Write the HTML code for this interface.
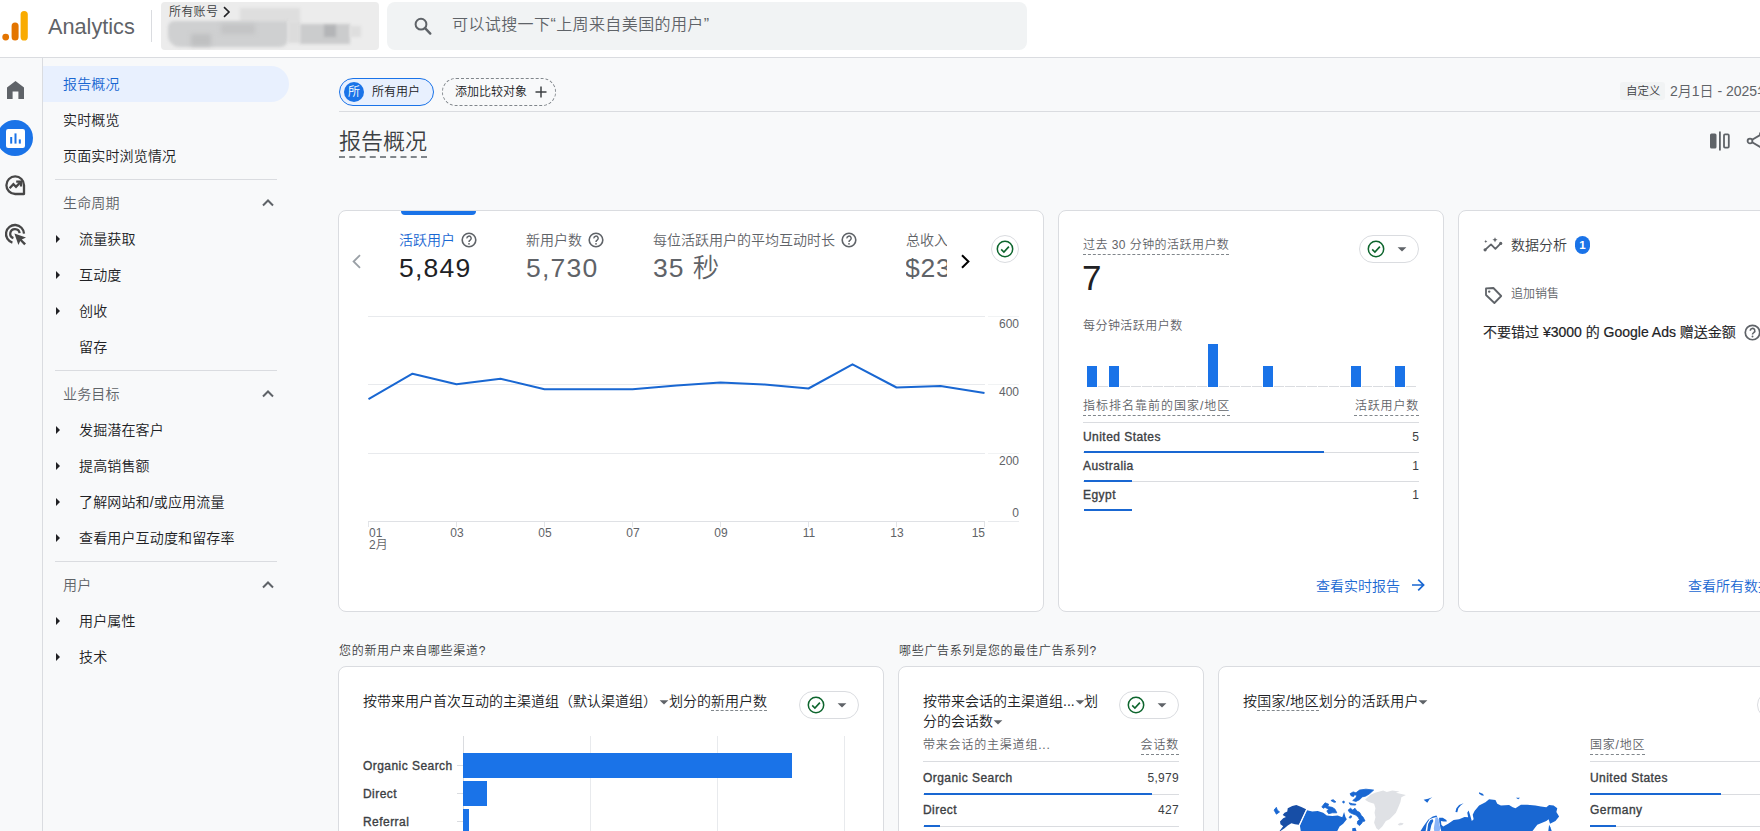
<!DOCTYPE html>
<html lang="zh-CN">
<head>
<meta charset="utf-8">
<title>Analytics</title>
<style>
*{box-sizing:border-box;margin:0;padding:0}
html,body{width:1760px;height:831px;overflow:hidden;background:#f8f9fa}
body{font-weight:350;position:relative;font-family:"Liberation Sans","Noto Sans CJK SC",sans-serif;color:#202124;font-size:14px}
.a{position:absolute}
.t{position:absolute;white-space:nowrap;line-height:20px;height:20px}
.g{color:#5f6368}
.d{color:#3c4043}
.b{color:#1a73e8}
.s12{font-size:12px;letter-spacing:.6px}
.m{-webkit-text-stroke:.35px currentColor}
.dash{border-bottom:1px dashed #80868b}
.card{position:absolute;background:#fff;border:1px solid #dadce0;border-radius:8px}
.hl{position:absolute;height:1px;background:#dadce0}
.bar{position:absolute;height:2px;background:#1967d2}
svg{position:absolute;overflow:visible}
/* header */
#hdr{left:0;top:0;width:1760px;height:58px;background:#fff;border-bottom:1px solid #dadce0}
#rail{left:0;top:58px;width:43px;height:773px;border-right:1px solid #dadce0;background:#f8f9fa}
.nav{position:absolute;left:63px;font-size:14px;letter-spacing:.15px;line-height:20px;height:20px;white-space:nowrap;color:#202124}
.sub{left:79px}
.sec{color:#5f6368}
.tri{position:absolute;left:56px;width:0;height:0;border-left:4px solid #202124;border-top:4px solid transparent;border-bottom:4px solid transparent}
.pill{position:absolute;width:60px;height:28px;border:1px solid #dadce0;border-radius:14px;background:#fff}
</style>
</head>
<body>
<!-- HEADER -->
<div class="a" id="hdr"></div>
<div class="a" id="rail"></div>
<!-- logo -->
<svg style="left:2px;top:11px" width="27" height="30" viewBox="0 0 27 30">
<rect x="18.6" y="0" width="7.2" height="29.5" rx="3.6" fill="#f9ab00"/>
<rect x="9.6" y="11.6" width="7" height="17.9" rx="3.5" fill="#e37400"/>
<circle cx="3.7" cy="26.1" r="3.4" fill="#e37400"/>
</svg>
<div class="t" style="left:48px;top:12px;font-size:21.7px;line-height:30px;height:30px;color:#5f6368">Analytics</div>
<div class="a" style="left:151px;top:10px;width:1px;height:32px;background:#dadce0"></div>
<!-- account box -->
<div class="a" style="left:161px;top:2px;width:218px;height:48px;background:#ececec;border-radius:4px;overflow:hidden">
 <div class="a" style="left:79px;top:6px;width:60px;height:14px;background:#dedede;filter:blur(1.5px)"></div>
 <div class="a" style="left:7px;top:19px;width:120px;height:26px;background:#cfd0d1;border-radius:6px 2px 8px 12px;filter:blur(1.5px)"></div>
 <div class="a" style="left:30px;top:32px;width:20px;height:12px;background:#bfc0c1;filter:blur(2px)"></div>
 <div class="a" style="left:60px;top:22px;width:34px;height:10px;background:#c3c4c5;filter:blur(2px)"></div>
 <div class="a" style="left:127px;top:19px;width:12px;height:22px;background:#dcdcdc;filter:blur(1.5px)"></div>
 <div class="a" style="left:139px;top:22px;width:50px;height:20px;background:#cbcccd;filter:blur(1.5px)"></div>
 <div class="a" style="left:163px;top:23px;width:12px;height:12px;background:#b4b5b7;filter:blur(1.5px)"></div>
 <div class="a" style="left:189px;top:24px;width:11px;height:11px;background:#dedede;filter:blur(1.5px)"></div>
</div>
<div class="t d" style="left:169px;top:2px;font-size:12px;letter-spacing:.3px">所有账号</div>
<svg style="left:222px;top:6px" width="10" height="12" viewBox="0 0 10 12"><path d="M2 1.2 L7 6 L2 10.8" fill="none" stroke="#202124" stroke-width="1.6"/></svg>
<!-- search -->
<div class="a" style="left:387px;top:2px;width:640px;height:48px;background:#f1f3f4;border-radius:8px"></div>
<svg style="left:413px;top:16px" width="20" height="20" viewBox="0 0 20 20"><circle cx="8" cy="8.2" r="5.4" fill="none" stroke="#5f6368" stroke-width="2"/><path d="M12 12.2 L17.3 17.6" stroke="#5f6368" stroke-width="2.4" stroke-linecap="round"/></svg>
<div class="t g" style="left:452px;top:13px;font-size:16px;line-height:24px;height:24px;letter-spacing:.4px">可以试搜一下“上周来自美国的用户”</div>
<!-- RAIL ICONS -->
<svg style="left:7px;top:81px" width="17" height="18" viewBox="0 0 17 18"><path d="M8.5 0 L17 6.6 V18 H11.4 V10.6 H5.6 V18 H0 V6.6 Z" fill="#5f6368"/></svg>
<div class="a" style="left:-3px;top:120px;width:36px;height:36px;border-radius:18px;background:#1a73e8"></div>
<svg style="left:6px;top:129px" width="19" height="19" viewBox="0 0 19 19"><rect x="0" y="0" width="19" height="19" rx="2.2" fill="#fff"/><rect x="4.2" y="8" width="2" height="6.6" fill="#1a73e8"/><rect x="8.5" y="4.4" width="2" height="10.2" fill="#1a73e8"/><rect x="12.8" y="10.4" width="2" height="4.2" fill="#1a73e8"/></svg>
<svg style="left:5px;top:175px" width="21" height="21" viewBox="0 0 21 21"><path d="M10.2 19 A8.8 8.8 0 1 1 19 10.2 V19 Z" fill="none" stroke="#474747" stroke-width="2.3" stroke-linejoin="round"/><path d="M4.6 13.2 L8.4 9.2 L11 11.8 L15 7.6" fill="none" stroke="#474747" stroke-width="2.3"/><path d="M11.2 6.6 H16 V11.4" fill="none" stroke="#474747" stroke-width="2.3"/></svg>
<svg style="left:5px;top:224px" width="22" height="22" viewBox="0 0 22 22"><path d="M7.4 18.6 A9 9 0 1 1 19 9.6" fill="none" stroke="#474747" stroke-width="2.3"/><path d="M8.4 14.2 A4.7 4.7 0 1 1 14.6 9.2" fill="none" stroke="#474747" stroke-width="2.3"/><path d="M9.4 9.4 L21 13.6 L16.8 15.4 L21 19.6 L19.2 21.2 L15.2 17 L13.4 21 Z" fill="#474747"/></svg>
<!-- SIDEBAR -->
<div class="a" style="left:43px;top:66px;width:246px;height:36px;border-radius:0 18px 18px 0;background:#e8f0fe"></div>
<div class="nav" style="top:74px;color:#1967d2">报告概况</div>
<div class="nav" style="top:110px">实时概览</div>
<div class="nav" style="top:146px">页面实时浏览情况</div>
<div class="hl" style="left:55px;top:179px;width:222px"></div>
<div class="nav sec" style="top:193px">生命周期</div>
<div class="tri" style="top:235px"></div><div class="nav sub" style="top:229px">流量获取</div>
<div class="tri" style="top:271px"></div><div class="nav sub" style="top:265px">互动度</div>
<div class="tri" style="top:307px"></div><div class="nav sub" style="top:301px">创收</div>
<div class="nav sub" style="top:337px">留存</div>
<div class="hl" style="left:55px;top:370px;width:222px"></div>
<div class="nav sec" style="top:384px">业务目标</div>
<div class="tri" style="top:426px"></div><div class="nav sub" style="top:420px">发掘潜在客户</div>
<div class="tri" style="top:462px"></div><div class="nav sub" style="top:456px">提高销售额</div>
<div class="tri" style="top:498px"></div><div class="nav sub" style="top:492px">了解网站和/或应用流量</div>
<div class="tri" style="top:534px"></div><div class="nav sub" style="top:528px">查看用户互动度和留存率</div>
<div class="hl" style="left:55px;top:561px;width:222px"></div>
<div class="nav sec" style="top:575px">用户</div>
<div class="tri" style="top:617px"></div><div class="nav sub" style="top:611px">用户属性</div>
<div class="tri" style="top:653px"></div><div class="nav sub" style="top:647px">技术</div>
<svg style="left:262px;top:199px" width="12" height="8" viewBox="0 0 12 8"><path d="M1 6.5 L6 1.5 L11 6.5" fill="none" stroke="#5f6368" stroke-width="2"/></svg>
<svg style="left:262px;top:390px" width="12" height="8" viewBox="0 0 12 8"><path d="M1 6.5 L6 1.5 L11 6.5" fill="none" stroke="#5f6368" stroke-width="2"/></svg>
<svg style="left:262px;top:581px" width="12" height="8" viewBox="0 0 12 8"><path d="M1 6.5 L6 1.5 L11 6.5" fill="none" stroke="#5f6368" stroke-width="2"/></svg>
<!-- TOP BAR of content -->
<div class="a" style="left:339px;top:78px;width:95px;height:28px;border:1px solid #1a73e8;border-radius:14px;background:#e8f0fe"></div>
<div class="a" style="left:344px;top:82px;width:20px;height:20px;border-radius:10px;background:#1a73e8"></div>
<div class="t" style="left:348px;top:82px;font-size:12px;color:#fff">所</div>
<div class="t" style="left:372px;top:82px;font-size:12px;color:#202124">所有用户</div>
<div class="a" style="left:442px;top:78px;width:114px;height:28px;border:1px dashed #80868b;border-radius:14px"></div>
<div class="t" style="left:455px;top:82px;font-size:12px;color:#202124">添加比较对象</div>
<svg style="left:535px;top:86px" width="12" height="12" viewBox="0 0 12 12"><path d="M6 0.5 V11.5 M0.5 6 H11.5" stroke="#3c4043" stroke-width="1.5"/></svg>
<div class="hl" style="left:339px;top:111px;width:1421px"></div>
<div class="a" style="left:1620px;top:82px;width:45px;height:18px;background:#f1f3f4;border-radius:3px"></div>
<div class="t d" style="left:1626px;top:81px;font-size:11.5px">自定义</div>
<div class="t g" style="left:1670px;top:81px;font-size:14px">2月1日 - 2025年2月15日</div>
<div class="t d" style="left:339px;top:127px;font-size:22px;line-height:30px;height:31px;border-bottom:2px dashed #80868b;color:#3c4043">报告概况</div>
<svg style="left:1709px;top:131px" width="22" height="20" viewBox="0 0 22 20"><rect x="1" y="2.5" width="6.5" height="15" rx="1.5" fill="#5f6368"/><rect x="10" y="0.5" width="1.8" height="19" fill="#5f6368"/><rect x="15" y="3.4" width="4.8" height="13.2" rx="1" fill="none" stroke="#5f6368" stroke-width="1.8"/></svg>
<svg style="left:1746px;top:130px" width="20" height="22" viewBox="0 0 20 22"><path d="M4 11 L15 4.5 M4 11 L15 17.5" stroke="#5f6368" stroke-width="1.8"/><circle cx="4" cy="11" r="2.4" fill="#f8f9fa" stroke="#5f6368" stroke-width="1.8"/><circle cx="15.5" cy="4" r="2.4" fill="#5f6368"/></svg>
<!-- CARD 1 -->
<div class="card" style="left:338px;top:210px;width:706px;height:402px"></div>
<div class="a" style="left:401px;top:211px;width:75px;height:4px;background:#1a73e8;border-radius:0 0 4px 4px"></div>
<svg style="left:351px;top:254px" width="11" height="15" viewBox="0 0 11 15"><path d="M9 1.2 L2.6 7.5 L9 13.8" fill="none" stroke="#9aa0a6" stroke-width="1.8"/></svg>
<div class="t b" style="left:399px;top:230px;color:#1967d2">活跃用户</div><svg style="left:461px;top:232px" width="16" height="16" viewBox="0 0 16 16"><circle cx="8" cy="8" r="6.8" fill="none" stroke="#5f6368" stroke-width="1.6"/><path d="M5.9 6.4 A2.15 2.15 0 1 1 9.2 8.1 C8.3 8.7 8 9 8 9.9" fill="none" stroke="#5f6368" stroke-width="1.5"/><circle cx="8" cy="11.8" r="0.9" fill="#5f6368"/></svg>
<div class="t" style="left:399px;top:252px;font-size:26.5px;line-height:32px;height:32px;letter-spacing:1.2px;color:#202124">5,849</div>
<div class="t g" style="left:526px;top:230px">新用户数</div><svg style="left:588px;top:232px" width="16" height="16" viewBox="0 0 16 16"><circle cx="8" cy="8" r="6.8" fill="none" stroke="#5f6368" stroke-width="1.6"/><path d="M5.9 6.4 A2.15 2.15 0 1 1 9.2 8.1 C8.3 8.7 8 9 8 9.9" fill="none" stroke="#5f6368" stroke-width="1.5"/><circle cx="8" cy="11.8" r="0.9" fill="#5f6368"/></svg>
<div class="t g" style="left:526px;top:252px;font-size:26.5px;line-height:32px;height:32px;letter-spacing:1.2px">5,730</div>
<div class="t g" style="left:653px;top:230px">每位活跃用户的平均互动时长</div><svg style="left:841px;top:232px" width="16" height="16" viewBox="0 0 16 16"><circle cx="8" cy="8" r="6.8" fill="none" stroke="#5f6368" stroke-width="1.6"/><path d="M5.9 6.4 A2.15 2.15 0 1 1 9.2 8.1 C8.3 8.7 8 9 8 9.9" fill="none" stroke="#5f6368" stroke-width="1.5"/><circle cx="8" cy="11.8" r="0.9" fill="#5f6368"/></svg>
<div class="t g" style="left:653px;top:252px;font-size:26.5px;line-height:32px;height:32px;letter-spacing:1px">35 秒</div>
<div class="a" style="left:906px;top:228px;width:41px;height:60px;overflow:hidden">
<div class="t g" style="left:0;top:2px">总收入</div>
<div class="t g" style="left:-1px;top:24px;font-size:26.5px;line-height:32px;height:32px;letter-spacing:.8px">$23,4</div>
</div>
<svg style="left:960px;top:254px" width="11" height="15" viewBox="0 0 11 15"><path d="M2 1.2 L8.4 7.5 L2 13.8" fill="none" stroke="#000" stroke-width="2"/></svg>
<div class="a" style="left:991px;top:235px;width:28px;height:28px;border:1px solid #dadce0;border-radius:14px;background:#fff"></div><svg style="left:996px;top:240px" width="18" height="18" viewBox="0 0 18 18"><circle cx="9" cy="9" r="7.7" fill="none" stroke="#0d652d" stroke-width="1.5"/><path d="M5.2 9.4 L7.9 12 L12.9 6.6" fill="none" stroke="#0d652d" stroke-width="1.6"/></svg>
<!-- chart -->
<div class="hl" style="left:368px;top:316px;width:617px;background:#e8eaed"></div><div class="hl" style="left:988px;top:316px;width:31px;background:#f1f3f4"></div>
<div class="hl" style="left:368px;top:384px;width:617px;background:#e8eaed"></div><div class="hl" style="left:988px;top:384px;width:31px;background:#f1f3f4"></div>
<div class="hl" style="left:368px;top:453px;width:617px;background:#e8eaed"></div><div class="hl" style="left:988px;top:453px;width:31px;background:#f1f3f4"></div>
<div class="hl" style="left:368px;top:521px;width:617px;background:#dfe1e5"></div><div class="hl" style="left:988px;top:521px;width:31px;background:#e8eaed"></div><div class="a" style="left:368px;top:522px;width:1px;height:5px;background:#e3e5e8"></div><div class="a" style="left:456px;top:522px;width:1px;height:5px;background:#e3e5e8"></div><div class="a" style="left:544px;top:522px;width:1px;height:5px;background:#e3e5e8"></div><div class="a" style="left:632px;top:522px;width:1px;height:5px;background:#e3e5e8"></div><div class="a" style="left:720px;top:522px;width:1px;height:5px;background:#e3e5e8"></div><div class="a" style="left:808px;top:522px;width:1px;height:5px;background:#e3e5e8"></div><div class="a" style="left:896px;top:522px;width:1px;height:5px;background:#e3e5e8"></div><div class="a" style="left:984px;top:522px;width:1px;height:5px;background:#e3e5e8"></div>
<div class="t g" style="left:980px;top:314px;width:39px;text-align:right;font-size:12px">600</div>
<div class="t g" style="left:980px;top:382px;width:39px;text-align:right;font-size:12px">400</div>
<div class="t g" style="left:980px;top:451px;width:39px;text-align:right;font-size:12px">200</div>
<div class="t g" style="left:980px;top:503px;width:39px;text-align:right;font-size:12px">0</div>
<svg style="left:339px;top:210px" width="705" height="401" viewBox="0 0 705 401"><polyline points="29.5,189.2 73.5,163.7 117.5,174.3 161.5,168.7 205.5,179.3 249.5,179.3 293.5,179.3 337.5,175.5 381.5,172.5 425.5,174.5 469.5,178.5 513.5,154.3 557.5,177.5 601.5,176.0 645.5,183.1" fill="none" stroke="#1967d2" stroke-width="2" stroke-linejoin="round"/></svg>
<div class="t g" style="left:369px;top:523px;font-size:12px">01</div>
<div class="t g" style="left:442px;top:523px;width:30px;text-align:center;font-size:12px">03</div>
<div class="t g" style="left:530px;top:523px;width:30px;text-align:center;font-size:12px">05</div>
<div class="t g" style="left:618px;top:523px;width:30px;text-align:center;font-size:12px">07</div>
<div class="t g" style="left:706px;top:523px;width:30px;text-align:center;font-size:12px">09</div>
<div class="t g" style="left:794px;top:523px;width:30px;text-align:center;font-size:12px">11</div>
<div class="t g" style="left:882px;top:523px;width:30px;text-align:center;font-size:12px">13</div>
<div class="t g" style="left:955px;top:523px;width:30px;text-align:right;font-size:12px">15</div>
<div class="t g" style="left:369px;top:535px;font-size:12px">2月</div>
<!-- CARD 2 -->
<div class="card" style="left:1058px;top:210px;width:386px;height:402px"></div>
<div class="t g s12 dash" style="left:1083px;top:235px;height:20px;letter-spacing:.45px">过去 30 分钟的活跃用户数</div>
<div class="t" style="left:1082px;top:256px;font-size:35px;line-height:44px;height:44px;color:#202124">7</div>
<div class="pill" style="left:1359px;top:235px"></div><svg style="left:1367px;top:240px" width="18" height="18" viewBox="0 0 18 18"><circle cx="9" cy="9" r="7.7" fill="none" stroke="#0d652d" stroke-width="1.5"/><path d="M5.2 9.4 L7.9 12 L12.9 6.6" fill="none" stroke="#0d652d" stroke-width="1.6"/></svg><svg style="left:1397px;top:246px" width="10" height="6" viewBox="0 0 10 6"><path d="M0.6 1.2 H9.4 L5 5.6 Z" fill="#5f6368"/></svg>
<div class="t g s12" style="left:1083px;top:316px;letter-spacing:.45px">每分钟活跃用户数</div>
<div class="a" style="left:1087px;top:366px;width:10px;height:21px;background:#1a73e8"></div><div class="a" style="left:1098px;top:386px;width:10px;height:1px;background:#dadce0"></div><div class="a" style="left:1109px;top:366px;width:10px;height:21px;background:#1a73e8"></div><div class="a" style="left:1120px;top:386px;width:10px;height:1px;background:#dadce0"></div><div class="a" style="left:1131px;top:386px;width:10px;height:1px;background:#dadce0"></div><div class="a" style="left:1142px;top:386px;width:10px;height:1px;background:#dadce0"></div><div class="a" style="left:1153px;top:386px;width:10px;height:1px;background:#dadce0"></div><div class="a" style="left:1164px;top:386px;width:10px;height:1px;background:#dadce0"></div><div class="a" style="left:1175px;top:386px;width:10px;height:1px;background:#dadce0"></div><div class="a" style="left:1186px;top:386px;width:10px;height:1px;background:#dadce0"></div><div class="a" style="left:1197px;top:386px;width:10px;height:1px;background:#dadce0"></div><div class="a" style="left:1208px;top:344px;width:10px;height:43px;background:#1a73e8"></div><div class="a" style="left:1219px;top:386px;width:10px;height:1px;background:#dadce0"></div><div class="a" style="left:1230px;top:386px;width:10px;height:1px;background:#dadce0"></div><div class="a" style="left:1241px;top:386px;width:10px;height:1px;background:#dadce0"></div><div class="a" style="left:1252px;top:386px;width:10px;height:1px;background:#dadce0"></div><div class="a" style="left:1263px;top:366px;width:10px;height:21px;background:#1a73e8"></div><div class="a" style="left:1274px;top:386px;width:10px;height:1px;background:#dadce0"></div><div class="a" style="left:1285px;top:386px;width:10px;height:1px;background:#dadce0"></div><div class="a" style="left:1296px;top:386px;width:10px;height:1px;background:#dadce0"></div><div class="a" style="left:1307px;top:386px;width:10px;height:1px;background:#dadce0"></div><div class="a" style="left:1318px;top:386px;width:10px;height:1px;background:#dadce0"></div><div class="a" style="left:1329px;top:386px;width:10px;height:1px;background:#dadce0"></div><div class="a" style="left:1340px;top:386px;width:10px;height:1px;background:#dadce0"></div><div class="a" style="left:1351px;top:366px;width:10px;height:21px;background:#1a73e8"></div><div class="a" style="left:1362px;top:386px;width:10px;height:1px;background:#dadce0"></div><div class="a" style="left:1373px;top:386px;width:10px;height:1px;background:#dadce0"></div><div class="a" style="left:1384px;top:386px;width:10px;height:1px;background:#dadce0"></div><div class="a" style="left:1395px;top:366px;width:10px;height:21px;background:#1a73e8"></div><div class="a" style="left:1406px;top:386px;width:10px;height:1px;background:#dadce0"></div>
<div class="t g s12 dash" style="left:1083px;top:396px;height:20px;letter-spacing:1px">指标排名靠前的国家/地区</div>
<div class="t g s12 dash" style="left:1354px;top:396px;height:20px;width:65px;text-align:right;letter-spacing:.8px;text-indent:.8px">活跃用户数</div>
<div class="hl" style="left:1083px;top:422px;width:336px"></div>
<div class="t d m" style="left:1083px;top:427px;font-size:12px;letter-spacing:.45px">United States</div><div class="t d" style="left:1380px;top:427px;width:39px;text-align:right;font-size:12px">5</div>
<div class="hl" style="left:1083px;top:452px;width:336px"></div><div class="bar" style="left:1084px;top:451px;width:240px"></div>
<div class="t d m" style="left:1083px;top:456px;font-size:12px;letter-spacing:.45px">Australia</div><div class="t d" style="left:1380px;top:456px;width:39px;text-align:right;font-size:12px">1</div>
<div class="hl" style="left:1083px;top:481px;width:336px"></div><div class="bar" style="left:1084px;top:480px;width:48px"></div>
<div class="t d m" style="left:1083px;top:485px;font-size:12px;letter-spacing:.45px">Egypt</div><div class="t d" style="left:1380px;top:485px;width:39px;text-align:right;font-size:12px">1</div>
<div class="bar" style="left:1084px;top:509px;width:48px"></div>
<div class="t" style="left:1316px;top:576px;color:#1967d2">查看实时报告</div>
<svg style="left:1411px;top:578px" width="14" height="14" viewBox="0 0 14 14"><path d="M1 7 H12 M7.2 1.6 L12.6 7 L7.2 12.4" fill="none" stroke="#1967d2" stroke-width="1.7"/></svg>
<!-- CARD 3 -->
<div class="card" style="left:1458px;top:210px;width:320px;height:402px"></div>
<svg style="left:1483px;top:237px" width="20" height="16" viewBox="0 0 20 16"><path d="M2.1 12.8 L8 7.4 L12.4 11.8 L17.7 6.4" fill="none" stroke="#5f6368" stroke-width="1.8" stroke-linejoin="round" stroke-linecap="round"/><circle cx="2.1" cy="12.8" r="1.6" fill="#5f6368"/><circle cx="17.7" cy="6.4" r="1.6" fill="#5f6368"/><path d="M12 0.2 L12.8 2 L14.6 2.8 L12.8 3.6 L12 5.4 L11.2 3.6 L9.4 2.8 L11.2 2 Z" fill="#5f6368"/><path d="M2.8 2.8 L3.3 3.9 L4.4 4.4 L3.3 4.9 L2.8 6 L2.3 4.9 L1.2 4.4 L2.3 3.9 Z" fill="#5f6368"/></svg>
<div class="t d" style="left:1511px;top:235px">数据分析</div>
<div class="a" style="left:1575px;top:236px;width:15px;height:18px;border-radius:7.5px;background:#1a73e8"></div>
<div class="t" style="left:1575px;top:235px;width:15px;text-align:center;font-size:11.5px;color:#fff;font-weight:700">1</div>
<svg style="left:1483px;top:286px" width="20" height="18" viewBox="0 0 20 18"><path d="M3 2.4 L10.4 2 L18.2 10 L11.4 17 L3 9 Z" fill="none" stroke="#5f6368" stroke-width="1.8" stroke-linejoin="round"/><circle cx="6.2" cy="5.6" r="1.2" fill="#5f6368"/></svg>
<div class="t g" style="left:1511px;top:284px;font-size:12px">追加销售</div>
<div class="t" style="left:1483px;top:322px;color:#202124;-webkit-text-stroke:.2px #202124">不要错过 ¥3000 的 Google Ads 赠送金额</div>
<svg style="left:1744px;top:324px" width="17" height="17" viewBox="0 0 16 16"><circle cx="8" cy="8" r="6.8" fill="none" stroke="#5f6368" stroke-width="1.6"/><path d="M5.9 6.4 A2.15 2.15 0 1 1 9.2 8.1 C8.3 8.7 8 9 8 9.9" fill="none" stroke="#5f6368" stroke-width="1.5"/><circle cx="8" cy="11.8" r="0.9" fill="#5f6368"/></svg>
<div class="t" style="left:1688px;top:576px;color:#1967d2">查看所有数据分析</div>
<!-- BOTTOM ROW -->
<div class="t d s12" style="left:339px;top:641px;letter-spacing:.7px">您的新用户来自哪些渠道?</div>
<div class="t d s12" style="left:899px;top:641px;letter-spacing:.7px">哪些广告系列是您的最佳广告系列?</div>
<div class="card" style="left:338px;top:666px;width:546px;height:200px"></div>
<div class="card" style="left:898px;top:666px;width:306px;height:200px"></div>
<div class="card" style="left:1218px;top:666px;width:600px;height:200px"></div>
<!-- card 4 -->
<div class="t" style="left:363px;top:691px;color:#202124">按带来用户首次互动的主渠道组（默认渠道组）</div>
<svg style="left:659px;top:699px" width="10" height="6" viewBox="0 0 10 6"><path d="M0.6 1.2 H9.4 L5 5.6 Z" fill="#5f6368"/></svg>
<div class="t" style="left:669px;top:691px;color:#202124">划分的<span class="dash" style="display:inline-block;height:20px">新用户数</span></div>
<div class="pill" style="left:799px;top:691px"></div><svg style="left:807px;top:696px" width="18" height="18" viewBox="0 0 18 18"><circle cx="9" cy="9" r="7.7" fill="none" stroke="#0d652d" stroke-width="1.5"/><path d="M5.2 9.4 L7.9 12 L12.9 6.6" fill="none" stroke="#0d652d" stroke-width="1.6"/></svg><svg style="left:837px;top:702px" width="10" height="6" viewBox="0 0 10 6"><path d="M0.6 1.2 H9.4 L5 5.6 Z" fill="#5f6368"/></svg>
<div class="a" style="left:463px;top:736px;width:1px;height:100px;background:#dadce0"></div>
<div class="a" style="left:590px;top:736px;width:1px;height:100px;background:#e8eaed"></div>
<div class="a" style="left:717px;top:736px;width:1px;height:100px;background:#e8eaed"></div>
<div class="a" style="left:844px;top:736px;width:1px;height:100px;background:#e8eaed"></div>
<div class="a" style="left:457px;top:765px;width:6px;height:1px;background:#dadce0"></div>
<div class="a" style="left:457px;top:793px;width:6px;height:1px;background:#dadce0"></div>
<div class="a" style="left:457px;top:821px;width:6px;height:1px;background:#dadce0"></div>
<div class="a" style="left:463px;top:753px;width:329px;height:25px;background:#1a73e8"></div>
<div class="a" style="left:463px;top:781px;width:24px;height:25px;background:#1a73e8"></div>
<div class="a" style="left:463px;top:809px;width:6px;height:24px;background:#1a73e8"></div>
<div class="t d m" style="left:363px;top:756px;font-size:12px;letter-spacing:.45px">Organic Search</div>
<div class="t d m" style="left:363px;top:784px;font-size:12px;letter-spacing:.45px">Direct</div>
<div class="t d m" style="left:363px;top:812px;font-size:12px;letter-spacing:.45px">Referral</div>
<!-- card 5 -->
<div class="t" style="left:923px;top:691px;color:#202124">按带来会话的主渠道组...</div>
<svg style="left:1075px;top:699px" width="10" height="6" viewBox="0 0 10 6"><path d="M0.6 1.2 H9.4 L5 5.6 Z" fill="#5f6368"/></svg>
<div class="t" style="left:1084px;top:691px;color:#202124">划</div>
<div class="t" style="left:923px;top:711px;color:#202124">分的会话数</div>
<svg style="left:993px;top:719px" width="10" height="6" viewBox="0 0 10 6"><path d="M0.6 1.2 H9.4 L5 5.6 Z" fill="#5f6368"/></svg>
<div class="pill" style="left:1119px;top:691px"></div><svg style="left:1127px;top:696px" width="18" height="18" viewBox="0 0 18 18"><circle cx="9" cy="9" r="7.7" fill="none" stroke="#0d652d" stroke-width="1.5"/><path d="M5.2 9.4 L7.9 12 L12.9 6.6" fill="none" stroke="#0d652d" stroke-width="1.6"/></svg><svg style="left:1157px;top:702px" width="10" height="6" viewBox="0 0 10 6"><path d="M0.6 1.2 H9.4 L5 5.6 Z" fill="#5f6368"/></svg>
<div class="t g s12" style="left:923px;top:735px;letter-spacing:.8px">带来会话的主渠道组...</div>
<div class="t g s12" style="left:1120px;top:735px;width:59px;text-align:right;letter-spacing:.8px"><span class="dash" style="display:inline-block;height:20px">会话数</span></div>
<div class="hl" style="left:923px;top:761px;width:256px"></div>
<div class="t d m" style="left:923px;top:768px;font-size:12px;letter-spacing:.45px">Organic Search</div><div class="t d" style="left:1130px;top:768px;width:49px;text-align:right;font-size:12px;letter-spacing:.3px">5,979</div>
<div class="hl" style="left:923px;top:794px;width:256px"></div><div class="bar" style="left:924px;top:793px;width:228px"></div>
<div class="t d m" style="left:923px;top:800px;font-size:12px;letter-spacing:.45px">Direct</div><div class="t d" style="left:1130px;top:800px;width:49px;text-align:right;font-size:12px;letter-spacing:.3px">427</div>
<div class="hl" style="left:923px;top:826px;width:256px"></div><div class="bar" style="left:924px;top:825px;width:16px"></div>
<!-- card 6 -->
<div class="t" style="left:1243px;top:691px;color:#202124;letter-spacing:.3px">按<span class="dash" style="display:inline-block;height:20px">国家/地区</span>划分的活跃用户</div>
<svg style="left:1418px;top:699px" width="10" height="6" viewBox="0 0 10 6"><path d="M0.6 1.2 H9.4 L5 5.6 Z" fill="#5f6368"/></svg>
<div class="t g s12" style="left:1590px;top:735px;letter-spacing:.8px"><span class="dash" style="display:inline-block;height:20px">国家/地区</span></div>
<div class="hl" style="left:1590px;top:761px;width:200px"></div>
<div class="t d m" style="left:1590px;top:768px;font-size:12px;letter-spacing:.45px">United States</div>
<div class="hl" style="left:1590px;top:794px;width:200px"></div><div class="bar" style="left:1590px;top:793px;width:131px"></div>
<div class="t d m" style="left:1590px;top:800px;font-size:12px;letter-spacing:.45px">Germany</div>
<div class="hl" style="left:1590px;top:826px;width:200px"></div><div class="bar" style="left:1590px;top:825px;width:26px"></div>
<div class="a" style="left:1219px;top:667px;width:541px;height:164px;overflow:hidden"><svg style="left:46px;top:114px" width="160" height="50" viewBox="0 0 1760 550"><polygon points="165,445 200,410 230,395 195,375 215,350 245,335 250,300 300,275 345,265 400,285 452,312 372,482 330,475 290,465 250,490 215,520 170,550 160,550 200,497 170,475" fill="#174ea6"/><polygon stroke="#1967d2" stroke-width="9" stroke-linejoin="round" points="100,320 125,290 135,320 160,340 125,365" fill="#1967d2"/><polygon points="462,322 520,335 580,330 640,350 680,380 740,385 800,380 850,400 870,340 885,395 900,420 860,470 820,500 790,560 395,560 384,492" fill="#1967d2"/><polygon stroke="#1967d2" stroke-width="9" stroke-linejoin="round" points="625,285 660,240 700,255 690,280 740,290 770,310 790,350 740,350 700,360 680,330 700,310 660,290 640,300" fill="#1967d2"/><polygon stroke="#1967d2" stroke-width="9" stroke-linejoin="round" points="725,215 750,205 780,230 760,235" fill="#1967d2"/><polygon stroke="#1967d2" stroke-width="9" stroke-linejoin="round" points="855,225 870,220 872,240 858,242" fill="#1967d2"/><polygon stroke="#1967d2" stroke-width="9" stroke-linejoin="round" points="935,140 970,120 1000,130 1040,100 1110,90 1195,100 1150,140 1110,165 1070,175 1040,205 1000,225 965,215 1000,185 1010,160 985,150 975,170 950,165" fill="#1967d2"/><polygon stroke="#1967d2" stroke-width="9" stroke-linejoin="round" points="925,240 960,250 1000,255 995,265 940,262" fill="#1967d2"/><polygon stroke="#1967d2" stroke-width="9" stroke-linejoin="round" points="915,320 940,300 965,320 990,300 1010,330 1040,345 1060,380 1080,400 1100,440 1075,445 1060,470 1040,490 1015,470 1020,440 1040,425 1025,400 1000,375 960,360 930,345" fill="#1967d2"/><polygon stroke="#1967d2" stroke-width="9" stroke-linejoin="round" points="925,400 945,380 955,395 935,410" fill="#1967d2"/><polygon points="960,520 995,515 1010,560 960,560" fill="#1967d2"/><polygon points="1100,205 1160,150 1210,130 1300,105 1340,120 1400,105 1480,115 1440,130 1550,155 1500,180 1490,230 1470,280 1440,350 1400,390 1370,420 1330,440 1290,500 1250,540 1225,520 1200,460 1215,400 1205,350 1215,300 1200,250 1140,230" fill="#dfe1e5"/><polygon points="1460,475 1490,460 1525,465 1510,485 1475,490" fill="#dfe1e5"/><line x1="457" y1="316" x2="378" y2="486" stroke="#fff" stroke-width="9"/></svg><svg style="left:191px;top:114px" width="160" height="50" viewBox="0 0 1760 550"><polygon points="150,205 200,195 245,180 215,200 190,240" fill="#1967d2"/><polygon points="110,560 150,495 200,425 250,390 290,380 300,392 250,408 215,422 185,470 170,560" fill="#1967d2"/><polygon points="188,560 200,470 225,428 250,420 257,440 235,485 218,560" fill="#1967d2"/><polygon points="262,520 275,440 280,402 300,397 315,420 320,470 335,520 322,560 268,560" fill="#8ab4f8"/><polygon points="320,405 360,405 400,430 405,445 370,445 340,440 345,480 365,500 420,470 480,430 540,420 600,395 640,400 630,350 645,325 660,370 680,440 700,420 690,370 710,330 760,270 830,235 870,200 940,210 960,250 1000,270 1090,265 1130,290 1160,300 1220,260 1290,260 1380,270 1440,280 1500,290 1530,265 1580,270 1620,300 1610,340 1640,390 1600,440 1540,470 1525,420 1500,440 1400,480 1340,560 345,560 332,500 322,450" fill="#1967d2"/><polygon points="500,340 510,300 540,265 590,245 560,268 532,300 520,345" fill="#1967d2"/><polygon points="760,125 800,140 815,160 790,160 760,140" fill="#1967d2"/><polygon points="1165,185 1210,185 1190,200" fill="#1967d2"/><polygon points="1520,560 1530,480 1545,510 1562,560" fill="#1967d2"/></svg></div>
<div class="pill" style="left:1757px;top:691px"></div>
</body>
</html>
